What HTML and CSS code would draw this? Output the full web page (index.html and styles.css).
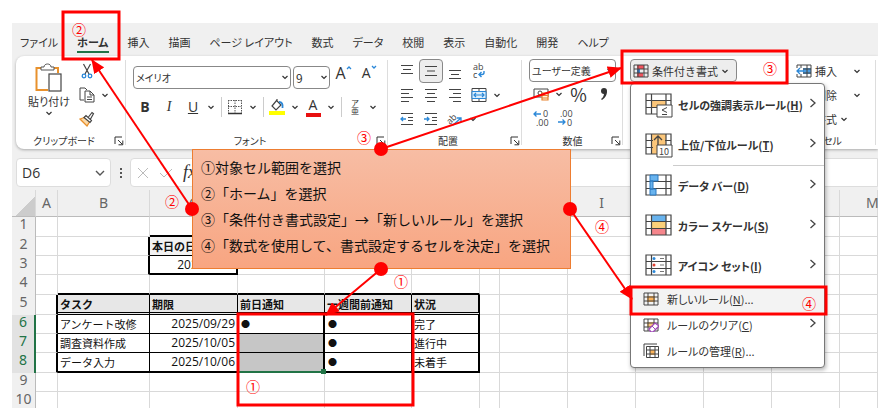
FILE: index.html
```
<!DOCTYPE html>
<html lang="ja">
  <head>
    <meta charset="UTF-8" />
    <meta name="viewport" content="width=device-width, initial-scale=1.0" />
    <title>条件付き書式の設定手順</title>
    <link rel="stylesheet" href="styles.css">
  </head>
  <body>
    <!-- shared icons -->
    <svg class="defs" aria-hidden="true">
      <symbol id="chev" viewBox="0 0 8 8"><path d="M1.5 3 4 5.5 6.5 3" fill="none" stroke="#333" stroke-width="1.2" /></symbol>
      <symbol id="right" viewBox="0 0 8 12"><path d="M1.5 2 6 6 1.5 10" fill="none" stroke="#444" stroke-width="1.3" /></symbol>
      <symbol id="launch" viewBox="0 0 10 10"><path d="M1 8V1h7M4 4l4.5 4.5M8.8 4.5v4.3H4.5" fill="none" stroke="#333" /></symbol>
      <symbol id="grid" viewBox="0 0 16 14"><path d="M1 1h14v12H1zM1 5h14M1 9h14M5 1v12M11 1v12" fill="none" stroke="#444" /></symbol>
      <symbol id="biggrid" viewBox="0 0 28 26"><path d="M1 2h25v20H1zM1 8.5h25M1 15.5h25M6.500 2v20M21 2v20" fill="none" stroke="#444" stroke-width="1.2" /></symbol>
    </svg>

    <div class="app">
      <nav class="tabs">
        <a href="#">ファイル</a>
        <a href="#" class="active">ホーム</a>
        <a href="#">挿入</a>
        <a href="#">描画</a>
        <a href="#">ページ レイアウト</a>
        <a href="#">数式</a>
        <a href="#">データ</a>
        <a href="#">校閲</a>
        <a href="#">表示</a>
        <a href="#">自動化</a>
        <a href="#">開発</a>
        <a href="#">ヘルプ</a>
      </nav>

      <div class="ribbon">
        <section class="group clipboard">
          <div class="tools">
            <button class="paste">
              <svg width="28" height="30" viewBox="0 0 28 30"><path d="M7 5H1.500v22H13M18 5h5v5" fill="none" stroke="#e8912d" stroke-width="2" /><path d="M6 7V4h3c0-4 7-4 7 0h3v3z" fill="#fff" stroke="#555" /><rect x="14" y="11" width="12" height="17" fill="#fff" stroke="#444" stroke-width="1.2" /></svg>
              <span>貼り付け</span>
              <svg width="8" height="8"><use href="#chev" /></svg>
            </button>
            <div class="stack">
              <button class="tool" aria-label="切り取り"><svg width="12" height="16" viewBox="0 0 12 16"><path d="M2.500 1 8 11M9.500 1 4 11" fill="none" stroke="#444" stroke-width="1.2" /><circle cx="3" cy="13" r="1.800" fill="none" stroke="#2b88d8" stroke-width="1.3" /><circle cx="9" cy="13" r="1.800" fill="none" stroke="#2b88d8" stroke-width="1.3" /></svg></button>
              <button class="tool" aria-label="コピー"><svg width="16" height="16" viewBox="0 0 16 16"><path d="M5 13H1V1h5l2 2M6 4h5l4 4v7H6zM11 4v4h4M8 10h5M8 12.500h5" fill="none" stroke="#444" /></svg></button>
              <button class="drop" aria-label="コピーの種類"><svg width="8" height="8"><use href="#chev" /></svg></button>
              <button class="tool" aria-label="書式のコピー"><svg width="16" height="16" viewBox="0 0 16 16"><path d="M1 8l6-2 4 4-3 5z" fill="#fbd9a8" stroke="#e8912d" stroke-width="1.300" /><path d="M5 6.500l6 5 1.500-2-5.500-5zM9.500 6l3.500-4.500 1.500 1.200L11.500 8" fill="#fff" stroke="#444" stroke-width="1.200" /></svg></button>
            </div>
          </div>
          <h2>クリップボード</h2>
          <svg class="launch"><use href="#launch" /></svg>
        </section>

        <section class="group font">
          <div class="row fields">
            <div class="field name">
              <select aria-label="フォント"><option>メイリオ</option></select>
              <svg><use href="#chev" /></svg>
            </div>
            <div class="field size">
              <select aria-label="サイズ"><option>9</option></select>
              <svg><use href="#chev" /></svg>
            </div>
            <button class="tool grow" aria-label="拡大">A<svg width="6" height="5" viewBox="0 0 6 5"><path d="M1 4l2-2 2 2" fill="none" stroke="#2b88d8" stroke-width="1.3" /></svg></button>
            <button class="tool shrink" aria-label="縮小">A<svg width="6" height="5" viewBox="0 0 6 5"><path d="M1 1l2 2 2-2" fill="none" stroke="#2b88d8" stroke-width="1.3" /></svg></button>
          </div>
          <div class="row">
            <button class="tool"><b>B</b></button>
            <button class="tool"><i>I</i></button>
            <button class="tool"><u>U</u></button>
            <button class="drop" aria-label="下線"><svg width="8" height="8"><use href="#chev" /></svg></button>
            <span class="bar"></span>
            <button class="tool" aria-label="罫線"><svg width="16" height="16" viewBox="0 0 16 16"><path d="M1.500 1v13M14.500 1v13M1 1.500h13M8 1v13M1 7.500h13" fill="none" stroke="#555" stroke-dasharray="1.500 1" /><path d="M1 14.500h14" stroke="#333" stroke-width="1.500" /></svg></button>
            <button class="drop" aria-label="罫線の種類"><svg width="8" height="8"><use href="#chev" /></svg></button>
            <span class="bar"></span>
            <button class="tool" aria-label="塗りつぶし"><svg width="16" height="18" viewBox="0 0 16 18"><path d="M8 2 3 8l4 4 5-5-4-4V1" fill="#fff" stroke="#444" stroke-width="1.200" /><path d="M10 4c3 0 4 2 3.500 6" fill="none" stroke="#2b88d8" stroke-width="1.800" /><path d="M0 13h16v4H0z" fill="#ff0" /></svg></button>
            <button class="drop" aria-label="塗りつぶしの色"><svg width="8" height="8"><use href="#chev" /></svg></button>
            <button class="tool color">A</button>
            <button class="drop" aria-label="文字の色"><svg width="8" height="8"><use href="#chev" /></svg></button>
            <span class="bar"></span>
            <button class="tool ruby">ア<br>亜</button>
            <button class="drop" aria-label="ふりがな"><svg width="8" height="8"><use href="#chev" /></svg></button>
          </div>
          <h2>フォント</h2>
          <svg class="launch"><use href="#launch" /></svg>
        </section>

        <section class="group align">
          <div class="cells">
            <button class="tool" aria-label="上揃え"><svg width="14" height="16" viewBox="0 0 14 16"><path d="M1 2.500h12M3 6.500h8M1 10.500h12" stroke="#444" stroke-width="1.200" /></svg></button>
            <button class="tool on" aria-label="上下中央揃え"><svg width="14" height="16" viewBox="0 0 14 16"><path d="M1 3.500h12M3 8h8M1 12.500h12" stroke="#444" stroke-width="1.200" /></svg></button>
            <button class="tool" aria-label="下揃え"><svg width="14" height="16" viewBox="0 0 14 16"><path d="M1 7.500h12M3 11.500h8M1 15.500h12" stroke="#444" stroke-width="1.200" /></svg></button>
            <button class="tool wrap" aria-label="折り返し"><svg width="16" height="18" viewBox="0 0 16 18"><text x="2" y="8">ab</text><text x="2" y="16">c</text><path d="M13 9v1.500q0 2-2 2H8M10.500 10 8 12.500l2.500 2.500" fill="none" stroke="#2b88d8" stroke-width="1.400" /></svg></button>
            <span></span>
            <button class="tool" aria-label="左揃え"><svg width="14" height="16" viewBox="0 0 14 16"><path d="M1 2.500h12M1 6.500h8M1 10.500h12M1 14.500h8" stroke="#444" stroke-width="1.200" /></svg></button>
            <button class="tool" aria-label="中央揃え"><svg width="14" height="16" viewBox="0 0 14 16"><path d="M1 2.500h12M3 6.500h8M1 10.500h12M3 14.500h8" stroke="#444" stroke-width="1.200" /></svg></button>
            <button class="tool" aria-label="右揃え"><svg width="14" height="16" viewBox="0 0 14 16"><path d="M1 2.500h12M5 6.500h8M1 10.500h12M5 14.500h8" stroke="#444" stroke-width="1.200" /></svg></button>
            <button class="tool" aria-label="セルを結合"><svg width="16" height="16" viewBox="0 0 16 16"><path d="M1 1.500h14v13H1zM8 1v3M8 12v3" fill="none" stroke="#444" /><path d="M1 4.500h14v7H1z" fill="#dceefb" stroke="#2b88d8" /><path d="M3 8h10M5 6 3 8l2 2M11 6l2 2-2 2" fill="none" stroke="#2b88d8" stroke-width="1.200" /></svg></button>
            <button class="drop" aria-label="結合の種類"><svg width="8" height="8"><use href="#chev" /></svg></button>
            <button class="tool" aria-label="インデントを減らす"><svg width="14" height="14" viewBox="0 0 14 14"><path d="M1 1.500h12M8 5.500h5M8 8.500h5M1 12.500h12" stroke="#444" /><path d="M6 7H1M3 5 1 7l2 2" fill="none" stroke="#2b88d8" stroke-width="1.300" /></svg></button>
            <button class="tool" aria-label="インデントを増やす"><svg width="14" height="14" viewBox="0 0 14 14"><path d="M1 1.500h12M8 5.500h5M8 8.500h5M1 12.500h12" stroke="#444" /><path d="M0 7h5M3 5l2 2-2 2" fill="none" stroke="#2b88d8" stroke-width="1.300" /></svg></button>
            <button class="tool wrap" aria-label="方向"><svg width="16" height="16" viewBox="0 0 16 16"><text x="0" y="11" transform="rotate(-45 5 9)">ab</text><path d="M6 14l8-7M10 7h4v4" fill="none" stroke="#2b88d8" stroke-width="1.300" /></svg></button>
            <button class="drop" aria-label="方向の種類"><svg width="8" height="8"><use href="#chev" /></svg></button>
          </div>
          <h2>配置</h2>
          <svg class="launch"><use href="#launch" /></svg>
        </section>

        <section class="group number">
          <div class="field">
            <select aria-label="表示形式"><option>ユーザー定義</option></select>
            <svg><use href="#chev" /></svg>
          </div>
          <div class="row">
            <button class="tool" aria-label="通貨"><svg width="16" height="16" viewBox="0 0 16 16"><path d="M1 3h14v8H1z" fill="#fff" stroke="#444" /><circle cx="7" cy="7" r="2" fill="none" stroke="#444" /><path d="M9 7h6v7H9zM9 9.500h6M9 12h6" fill="#fff3e0" stroke="#e8812d" stroke-width="1.200" /></svg></button>
            <button class="drop" aria-label="通貨の種類"><svg width="8" height="8"><use href="#chev" /></svg></button>
            <button class="tool percent">%</button>
            <button class="tool comma" aria-label="桁区切り"><svg width="8" height="14" viewBox="0 0 8 14"><circle cx="4" cy="4" r="3" fill="#333" /><path d="M7 4q0 6-5 9l-1-1q3-2 3-6z" fill="#333" /></svg></button>
          </div>
          <div class="row">
            <button class="tool wrap" aria-label="小数点以下の桁数を増やす"><svg width="16" height="16" viewBox="0 0 16 16"><text x="10" y="7">0</text><text x="3" y="16">.00</text><path d="M8 4H1M3.500 1.500 1 4l2.500 2.500" fill="none" stroke="#2b88d8" stroke-width="1.300" /></svg></button>
            <button class="tool wrap" aria-label="小数点以下の桁数を減らす"><svg width="16" height="16" viewBox="0 0 16 16"><text x="3" y="7">.00</text><text x="10" y="16">0</text><path d="M1 12h7M5.500 9.500 8 12l-2.500 2.500" fill="none" stroke="#2b88d8" stroke-width="1.300" /></svg></button>
          </div>
          <h2>数値</h2>
          <svg class="launch"><use href="#launch" /></svg>
        </section>

        <section class="group styles">
          <button class="cond">
            <svg width="16" height="14" viewBox="0 0 16 14"><path d="M4 1h7v4H4zM4 9h6v4H4z" fill="#f0525c" /><path d="M4 5h3v4H4z" fill="#3c7fd0" /><use href="#grid" width="16" height="14" /></svg>
            条件付き書式
            <svg width="8" height="8"><use href="#chev" /></svg>
          </button>
        </section>

        <section class="group cell-tools">
          <button class="line"><svg width="16" height="14" viewBox="0 0 16 14"><path d="M6 4h9v6H6z" fill="#4a9be0" /><use href="#grid" width="16" height="14" /><path d="M0 4h7v6H0z" fill="#fff" /><path d="M8 7H1M4 4 1 7l3 3" fill="none" stroke="#2b88d8" stroke-width="1.300" /></svg><span>挿入</span><svg width="8" height="8"><use href="#chev" /></svg></button>
          <button class="line"><svg width="16" height="14"><use href="#grid" /></svg><span>削除</span><svg width="8" height="8"><use href="#chev" /></svg></button>
          <button class="line near"><svg width="16" height="14"><use href="#grid" /></svg><span>書式</span><svg width="8" height="8"><use href="#chev" /></svg></button>
          <h2>セル</h2>
        </section>
      </div>

      <div class="formula-bar">
        <div class="name-box">
          <input type="text" aria-label="名前ボックス" value="D6">
          <svg width="12" height="12" viewBox="0 0 12 12"><path d="M2 4l4 4 4-4" fill="none" stroke="#555" stroke-width="1.400" /></svg>
        </div>
        <span class="dots"></span>
        <div class="formula">
          <svg width="12" height="12" viewBox="0 0 12 12"><path d="M1 1l10 10M11 1 1 11" stroke="#bbb" /></svg>
          <svg width="14" height="12" viewBox="0 0 14 12"><path d="M1 6l4 4 8-8" fill="none" stroke="#bbb" /></svg>
          <i>fx</i>
          <input type="text" aria-label="数式バー">
        </div>
      </div>

      <table class="sheet">
        <colgroup>
          <col class="w-head"><col class="w-a"><col class="w-b"><col class="w-c"><col class="w-d"><col class="w-d"><col class="w-f"><col class="w-g"><col class="w-f"><col class="w-f"><col class="w-f"><col class="w-f"><col class="w-f"><col>
        </colgroup>
        <thead>
          <tr><th class="corner"></th><th>A</th><th>B</th><th>C</th><th>D</th><th>E</th><th>F</th><th>G</th><th>H</th><th>I</th><th>J</th><th>K</th><th>L</th><th class="last">M</th></tr>
        </thead>
        <tbody>
          <tr class="tall"><th>1</th><td></td><td></td><td class="bb"></td><td></td><td></td><td></td><td></td><td></td><td></td><td></td><td></td><td></td><td></td></tr>
          <tr><th>2</th><td></td><td class="br"></td><td class="label today">本日の日付</td><td></td><td></td><td></td><td></td><td></td><td></td><td></td><td></td><td></td><td></td></tr>
          <tr><th>3</th><td></td><td class="br"></td><td class="date today bb">2025/9/29</td><td></td><td></td><td></td><td></td><td></td><td></td><td></td><td></td><td></td><td></td></tr>
          <tr class="tall"><th>4</th><td></td><td class="bb"></td><td class="bb"></td><td class="bb"></td><td class="bb"></td><td class="bb"></td><td></td><td></td><td></td><td></td><td></td><td></td><td></td></tr>
          <tr class="tall titles"><th>5</th><td class="br"></td><td class="label">タスク</td><td class="label">期限</td><td class="label">前日通知</td><td class="label">一週間前通知</td><td class="label br">状況</td><td></td><td></td><td></td><td></td><td></td><td></td><td></td></tr>
          <tr class="task"><th>6</th><td class="br"></td><td>アンケート改修</td><td class="date">2025/09/29</td><td class="sel mark">●</td><td class="mark">●</td><td class="br">完了</td><td></td><td></td><td></td><td></td><td></td><td></td><td></td></tr>
          <tr class="task"><th>7</th><td class="br"></td><td>調査資料作成</td><td class="date">2025/10/05</td><td class="sel fill"></td><td class="mark">●</td><td class="br">進行中</td><td></td><td></td><td></td><td></td><td></td><td></td><td></td></tr>
          <tr class="tall task end"><th>8</th><td class="br"></td><td>データ入力</td><td class="date">2025/10/06</td><td class="sel fill"><span class="handle"></span></td><td class="mark">●</td><td class="br">未着手</td><td></td><td></td><td></td><td></td><td></td><td></td><td></td></tr>
          <tr><th>9</th><td></td><td></td><td></td><td></td><td></td><td></td><td></td><td></td><td></td><td></td><td></td><td></td><td></td></tr>
          <tr class="last-row"><th>10</th><td></td><td></td><td></td><td></td><td></td><td></td><td></td><td></td><td></td><td></td><td></td><td></td><td></td></tr>
        </tbody>
      </table>
    </div>

    <div class="menu">
      <button class="big"><svg width="28" height="26" viewBox="0 0 28 26"><path d="M7 9h14v7H7z" fill="#fbc67a" /><use href="#biggrid" width="28" height="26" /><path d="M12 13h15v12H12z" fill="#fff" stroke="#444" /><path d="M22 15.500l-5 2.500 5 2.500M17 22.500h5" fill="none" stroke="#444" /></svg><span>セルの強調表示ルール(<u>H</u>)</span><svg class="more"><use href="#right" /></svg></button>
      <button class="big"><svg width="28" height="26" viewBox="0 0 28 26"><path d="M7 2h14v20H7z" fill="#fbc67a" /><use href="#biggrid" width="28" height="26" /><path d="M8 3h12v18H8z" fill="#fbc67a" /><path d="M13 14V4M9 8l4-4 4 4" fill="none" stroke="#444" stroke-width="1.300" /><path d="M12 13h15v12H12z" fill="#fff" stroke="#444" /><text x="14" y="23">10</text></svg><span>上位/下位ルール(<u>T</u>)</span><svg class="more"><use href="#right" /></svg></button>
      <hr>
      <button class="big"><svg width="28" height="26" viewBox="0 0 28 26"><use href="#biggrid" width="28" height="26" /><path d="M5 2h8v6H5zM5 8h3v8H5zM5 16h6v6H5z" fill="#68b3ee" stroke="#2b78c0" /></svg><span>データ バー(<u>D</u>)</span><svg class="more"><use href="#right" /></svg></button>
      <button class="big"><svg width="28" height="26" viewBox="0 0 28 26"><path d="M6 2h15v7H6z" fill="#68b3ee" /><path d="M6 9h15v6H6z" fill="#fbd07a" /><path d="M6 15h15v7H6z" fill="#f5868c" /><use href="#biggrid" width="28" height="26" /></svg><span>カラー スケール(<u>S</u>)</span><svg class="more"><use href="#right" /></svg></button>
      <button class="big"><svg width="28" height="26" viewBox="0 0 28 26"><use href="#biggrid" width="28" height="26" /><circle cx="9" cy="5.500" r="1.500" fill="#2b88d8" /><circle cx="9" cy="12" r="1.500" fill="#e04030" /><circle cx="9" cy="18.500" r="1.500" fill="#2b88d8" /><path d="M15 5.500h4M15 12h4M15 18.500h4" stroke="#777" /></svg><span>アイコン セット(<u>I</u>)</span><svg class="more"><use href="#right" /></svg></button>
      <button class="small hover"><svg width="16" height="14" viewBox="0 0 16 14"><path d="M4 4h8v6H4z" fill="#fbb35a" /><use href="#grid" width="16" height="14" /></svg><span>新しいルール(<u>N</u>)...</span></button>
      <button class="small"><svg width="16" height="14" viewBox="0 0 16 14"><path d="M4 4h8v5H4z" fill="#fbc67a" /><use href="#grid" width="16" height="14" /><path d="M6 11l6-6 4 3-6 6H8z" fill="#fff" stroke="#a04ab8" stroke-width="1.300" /><path d="M9 8l3 3" stroke="#a04ab8" /></svg><span>ルールのクリア(<u>C</u>)</span><svg class="more"><use href="#right" /></svg></button>
      <button class="small"><svg width="16" height="16" viewBox="0 0 16 16"><path d="M1 13V1h13" fill="none" stroke="#444" /><path d="M7 7h5v5H7z" fill="#fbb35a" /><path d="M3.500 3.500h12v11h-12zM3 7h12M3 11h12M7 3v12M12 3v12" fill="none" stroke="#444" /></svg><span>ルールの管理(<u>R</u>)...</span></button>
    </div>

    <ol class="callout">
      <li>①対象セル範囲を選択</li>
      <li>②「ホーム」を選択</li>
      <li>③「条件付き書式設定」→「新しいルール」を選択</li>
      <li>④「数式を使用して、書式設定するセルを決定」を選択</li>
    </ol>

    <!-- frames, arrows and step numbers -->
    <svg class="notes">
      <defs>
        <marker id="head" viewBox="0 0 14 12" refX="13" refY="6" markerWidth="14" markerHeight="12" markerUnits="userSpaceOnUse" orient="auto"><path d="M0 0l14 6-14 6z" fill="#f00" /></marker>
      </defs>
      <g class="frames">
        <rect x="63" y="12" width="56" height="47" />
        <rect x="622" y="51" width="165" height="32" />
        <rect x="631" y="287" width="195" height="27" />
        <rect x="238" y="314" width="175" height="91" />
      </g>
      <g class="arrows">
        <path d="M192 209 92 60" />
        <path d="M381 149 621 68" />
        <path d="M570 209 632 299" />
        <path d="M381 269 326 315" />
      </g>
      <g class="ends">
        <circle cx="192" cy="209" r="7" />
        <circle cx="381" cy="149" r="7" />
        <circle cx="570" cy="209" r="7" />
        <circle cx="381" cy="269" r="7" />
      </g>
      <g class="steps">
        <text x="79" y="35">②</text>
        <text x="172" y="207">②</text>
        <text x="364" y="143">③</text>
        <text x="770" y="74">③</text>
        <text x="602" y="232">④</text>
        <text x="809" y="309">④</text>
        <text x="401" y="287">①</text>
        <text x="253" y="392">①</text>
      </g>
    </svg>
  </body>
</html>
```
FILE: styles.css
```
:root {
  --ui: "Noto Sans CJK JP", sans-serif;
  --text: #333;
  --line: #d9d9d9;
  --bg: #f0f0f0;
  --green: #217346;
  --red: #f00;
}
* {
  box-sizing: border-box;
}
body {
  position: relative;
  margin: 0;
  padding: 23px 8px 8px 12px;
  background: #fff;
  color: var(--text);
  font-family: var(--ui);
  font-size: 11px;
  overflow: hidden;
}
button,
select,
input {
  margin: 0;
  padding: 0;
  border: none;
  background: none;
  color: inherit;
  font: inherit;
}
svg {
  flex: none;
}
.defs {
  position: absolute;
  width: 0;
  height: 0;
}
.app {
  background: var(--bg);
  overflow: hidden;
}

/* tabs */
.tabs {
  display: flex;
  gap: 19px;
  height: 33px;
  padding: 10px 8px 0;
  font-feature-settings: "palt";
}
.tabs a {
  height: 20px;
  line-height: 18px;
  color: var(--text);
  text-decoration: none;
  white-space: nowrap;
}
.tabs a.active {
  font-weight: bold;
  border-bottom: 2px solid var(--green);
}

/* ribbon */
.ribbon {
  display: flex;
  height: 93px;
  margin-left: 4px;
  background: #fff;
  border-radius: 8px 0 0 8px;
  box-shadow: 0 1px 3px rgba(0, 0, 0, 0.3);
}
.group {
  position: relative;
  display: flex;
  flex-direction: column;
  flex: none;
  padding: 3px 7px 0;
}
.group::after {
  content: "";
  position: absolute;
  top: 4px;
  right: 0;
  bottom: 4px;
  width: 1px;
  background: #ddd;
}
.group h2 {
  margin: auto 0 0;
  font-size: 10px;
  font-weight: normal;
  line-height: 16px;
  text-align: center;
  font-feature-settings: "palt";
}
.launch {
  position: absolute;
  right: 2px;
  bottom: 3px;
  width: 10px;
  height: 10px;
}
.clipboard {
  width: 110px;
}
.clipboard h2,
.align h2,
.font h2 {
  padding-right: 14px;
}
.font {
  width: 262px;
}
.align {
  width: 134px;
}
.number {
  width: 101px;
}
.styles {
  width: 166px;
}
.cell-tools {
  width: 87px;
}
.tools {
  display: flex;
}
.paste {
  display: flex;
  flex-direction: column;
  align-items: center;
  width: 52px;
  padding-top: 4px;
  line-height: 16px;
  white-space: nowrap;
  font-feature-settings: "palt";
}
.stack {
  display: grid;
  grid-template-columns: 24px 16px;
  grid-template-rows: 24px 24px 24px;
}
.stack .tool {
  grid-column: 1;
}
.row {
  display: flex;
  align-items: center;
  height: 24px;
}
.font .row {
  margin-top: 6px;
}
.font .fields {
  gap: 2px;
}
.tool {
  display: flex;
  align-items: center;
  justify-content: center;
  width: 24px;
  height: 24px;
  font-size: 14px;
  line-height: 16px;
}
.font .tool {
  font-family: "Open Sans", sans-serif;
}
.tool i {
  font-family: "Liberation Serif", serif;
}
.tool.on {
  background: #ededed;
  border: 1px solid #888;
  border-radius: 4px;
}
.drop {
  display: flex;
  align-items: center;
  justify-content: center;
  width: 12px;
  height: 24px;
}
.bar {
  width: 1px;
  height: 20px;
  margin: 0 1px 0 4px;
  background: #ccc;
}
.field {
  position: relative;
  height: 23px;
}
.field select {
  width: 100%;
  height: 100%;
  padding: 0 2px;
  border: 1px solid #888;
  border-radius: 4px;
  appearance: none;
  font-size: 10px;
  font-feature-settings: "palt";
}
.field svg {
  position: absolute;
  top: 7px;
  right: 2px;
  width: 8px;
  height: 8px;
}
.field.name {
  width: 160px;
}
.field.size {
  width: 37px;
}
.field.size select {
  font-size: 12px;
}
.grow,
.shrink {
  align-items: flex-start;
}
.font .grow {
  font-size: 16px;
}
.color {
  flex-direction: column;
}
.color::after {
  content: "";
  width: 15px;
  height: 4px;
  background: #e81010;
}
.font .ruby {
  font-family: var(--ui);
  font-size: 8px;
  line-height: 8px;
}
.cells {
  display: grid;
  grid-template-columns: repeat(4, 24px) 18px;
}
.wrap svg {
  overflow: visible;
}
.wrap text {
  font-family: "Open Sans", sans-serif;
  font-size: 9px;
  fill: #444;
}
.percent {
  width: 28px;
  font-size: 18px;
}
.cond {
  display: flex;
  align-items: center;
  gap: 3px;
  width: 107px;
  height: 23px;
  padding: 0 2px;
  border: 1px solid #888;
  border-radius: 4px;
  background: #ededed;
  white-space: nowrap;
}
.line {
  display: flex;
  align-items: center;
  gap: 3px;
  height: 24px;
  padding: 0;
}
.line svg:last-child {
  margin-left: 13px;
}
.line.near svg:last-child {
  margin-left: 0;
}

/* formula bar */
.formula-bar {
  display: flex;
  height: 41px;
  padding: 9px 0 3px 4px;
}
.name-box,
.formula {
  display: flex;
  align-items: center;
  background: #fff;
  border: 1px solid #ddd;
  border-radius: 4px;
}
.name-box {
  width: 95px;
  padding: 0 4px 0 5px;
}
.name-box input {
  width: 100%;
  min-width: 0;
  font-family: "Open Sans", sans-serif;
  font-size: 14px;
}
.dots {
  width: 2px;
  height: 10px;
  margin: 10px 8px 0 9px;
  background: repeating-linear-gradient(#555 0 2px, transparent 2px 4px);
}
.formula {
  flex: 1;
  gap: 10px;
  padding-left: 6px;
  border-radius: 4px 0 0 4px;
}
.formula i {
  font-family: "Liberation Serif", serif;
  font-size: 18px;
}
.formula input {
  flex: 1;
}

/* worksheet */
.sheet {
  width: 100%;
  table-layout: fixed;
  border-spacing: 0;
  background: #fff;
  line-height: 16px;
}
.w-head { width: 24px; }
.w-a { width: 22px; }
.w-b { width: 92px; }
.w-c { width: 88px; }
.w-d { width: 87px; }
.w-f { width: 68px; }
.w-g { width: 20px; }
.sheet th {
  padding: 0;
  background: var(--bg);
  border: 0 solid var(--line);
  border-right-width: 1px;
  color: #666;
  font-family: "Noto Sans", sans-serif;
  font-size: 14px;
  font-weight: normal;
}
.sheet thead th {
  height: 27px;
  border-bottom: 1px solid #bbb;
}
.sheet thead .corner {
  background: linear-gradient(135deg, var(--bg) 60%, #ccc 60%);
}
.sheet .last {
  padding-left: 26px;
  text-align: left;
}
.sheet tbody th {
  border-right-color: #bbb;
  line-height: 14px;
  vertical-align: top;
}
.sheet td {
  height: 19px;
  padding: 0 2px;
  border: 0 solid var(--line);
  border-right-width: 1px;
  border-bottom-width: 1px;
  color: #111;
  white-space: nowrap;
}
.sheet .tall td {
  height: 20px;
}
.sheet .last-row td {
  height: 16px;
  border-bottom: none;
}
.sheet .label {
  background: #e7e7e7;
  font-weight: bold;
}
.sheet .date {
  font-family: "Open Sans", sans-serif;
  font-size: 12px;
  text-align: right;
}
.sheet .today {
  border-right: 2px solid #000;
  border-bottom: 1px solid #000;
}
.sheet .today.label {
  background: #f2f2f2;
}
.sheet .br {
  border-right: 2px solid #000;
}
.sheet .bb {
  border-bottom: 2px solid #000;
}
.sheet .mark {
  padding-left: 3px;
  font-size: 9px;
}
.titles .label {
  border-right-color: #000;
  border-bottom: 3px double #000;
}
.task td:nth-child(n + 3):nth-child(-n + 7) {
  border-color: #000;
}
.task.end td:nth-child(n + 3):nth-child(-n + 7) {
  border-bottom-width: 2px;
}
.sheet .task th {
  background: #e2e2e2;
  border-right: 2px solid var(--green);
  color: var(--green);
}
.sheet .task .sel {
  position: relative;
  border-right: 2px solid var(--green);
}
.sheet .task.end .sel {
  border-bottom-color: var(--green);
}
.fill {
  background: #c6c6c6;
}
.handle {
  position: absolute;
  right: -3px;
  bottom: -3px;
  width: 5px;
  height: 5px;
  background: var(--green);
}

/* conditional formatting menu */
.menu {
  position: absolute;
  top: 83px;
  left: 630px;
  width: 195px;
  padding: 1px 0 3px;
  background: #fff;
  border: 1px solid #777;
  border-radius: 4px;
  box-shadow: 1px 2px 4px rgba(0, 0, 0, 0.3);
  font-feature-settings: "palt";
}
.menu button {
  display: flex;
  align-items: center;
  width: 100%;
  text-align: left;
  white-space: nowrap;
}
.menu .big {
  gap: 5px;
  height: 40px;
  padding: 0 7px 0 14px;
  font-weight: bold;
}
.menu .small {
  gap: 8px;
  height: 26px;
  padding: 0 7px 0 12px;
}
.menu .hover {
  background: #f3f3f3;
}
.menu .more {
  width: 8px;
  height: 12px;
  margin: 0 0 4px auto;
}
.menu text {
  font-size: 9px;
  font-weight: normal;
  fill: #444;
}
.menu hr {
  height: 1px;
  margin: 0 0 0 42px;
  border: none;
  background: #ccc;
}

/* instructions */
.callout {
  position: absolute;
  top: 149px;
  left: 192px;
  width: 379px;
  margin: 0;
  padding: 4px 8px 10px;
  border: 1px solid #ed7d31;
  background: linear-gradient(#f7bda4, #f8a581);
  color: #111;
  font-size: 14px;
  line-height: 26px;
  list-style: none;
  white-space: nowrap;
}
.notes {
  position: absolute;
  top: 0;
  left: 0;
  width: 100%;
  height: 100%;
  pointer-events: none;
}
.frames rect,
.arrows path {
  fill: none;
  stroke: var(--red);
  stroke-width: 2;
}
.frames rect {
  stroke-width: 3;
}
.arrows path {
  marker-end: url(#head);
}
.ends {
  fill: var(--red);
}
.steps {
  fill: var(--red);
  font-size: 14px;
  text-anchor: middle;
}
```
